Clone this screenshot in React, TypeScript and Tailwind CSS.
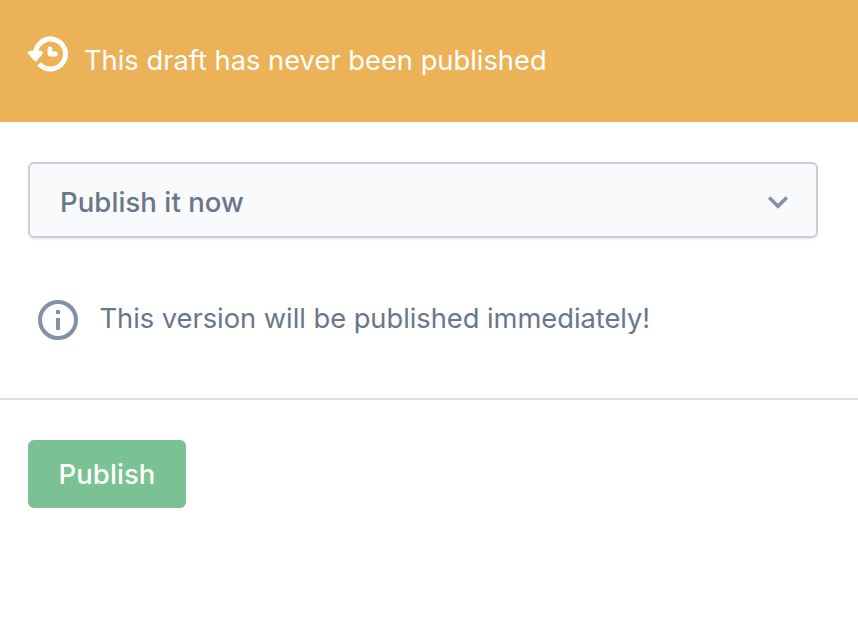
import React from "react";

function HistoryIcon() {
  return (
    <svg className="mt-[36px] h-9 w-10 shrink-0" viewBox="0 0 40 36" fill="none" stroke="white" strokeWidth="5" strokeLinejoin="round">
      <path d="M7.5 17.9A15 15 0 1 1 11.2 27.8" />
      <path d="M2.2 16.9H12.6L7.5 22.8Z" fill="white" strokeWidth="4.4" />
      <path d="M22 13V18H27.5" strokeLinecap="round" strokeWidth="4.8" />
    </svg>
  );
}

export default function App() {
  return (
    <main className="flex h-[620px] w-[858px] flex-col overflow-hidden bg-white font-['Inter',sans-serif] text-[27.3px] leading-10 text-[#697789]">
      <header className="flex h-[122px] shrink-0 bg-[#ebb258] pl-7 text-white">
        <HistoryIcon />
        <p className="mt-[41px] ml-4 whitespace-nowrap">This draft has never been published</p>
      </header>
      <section className="flex h-[278px] shrink-0 flex-col border-b-2 border-[#dce0e4] pt-10">
        <button className="ml-7 flex h-[76px] w-[790px] items-center justify-between rounded-md border-2 border-[#c8ced5] bg-[#f8fafc] pt-1 pr-7 pl-[30px] text-left text-[27.5px] font-medium tracking-[0.08px] shadow-[0_2px_2px_#0000000f]">
          <span>Publish it now</span>
          <svg className="h-5 w-5" viewBox="0 0 20 20" fill="none" stroke="#8291a5" strokeWidth="3.5"><path d="M1.2 5.5L10 14.3L18.8 5.5" /></svg>
        </button>
        <div className="mt-[60px] ml-[38px] flex">
          <svg className="mt-[2px] h-10 w-10" viewBox="0 0 40 40" fill="none" stroke="#8291a5" strokeWidth="4"><circle cx="20" cy="20" r="18" /><path d="M20 18V30M20 10V14" /></svg>
          <p className="mt-px ml-[21.5px] whitespace-nowrap tracking-[-0.03px]">This version will be published immediately!</p>
        </div>
      </section>
      <button className="mt-10 ml-7 h-[68px] w-[158px] rounded-md bg-[#7ac193] text-[27.5px] font-medium tracking-[0.08px] text-white">Publish</button>
    </main>
  );
}
